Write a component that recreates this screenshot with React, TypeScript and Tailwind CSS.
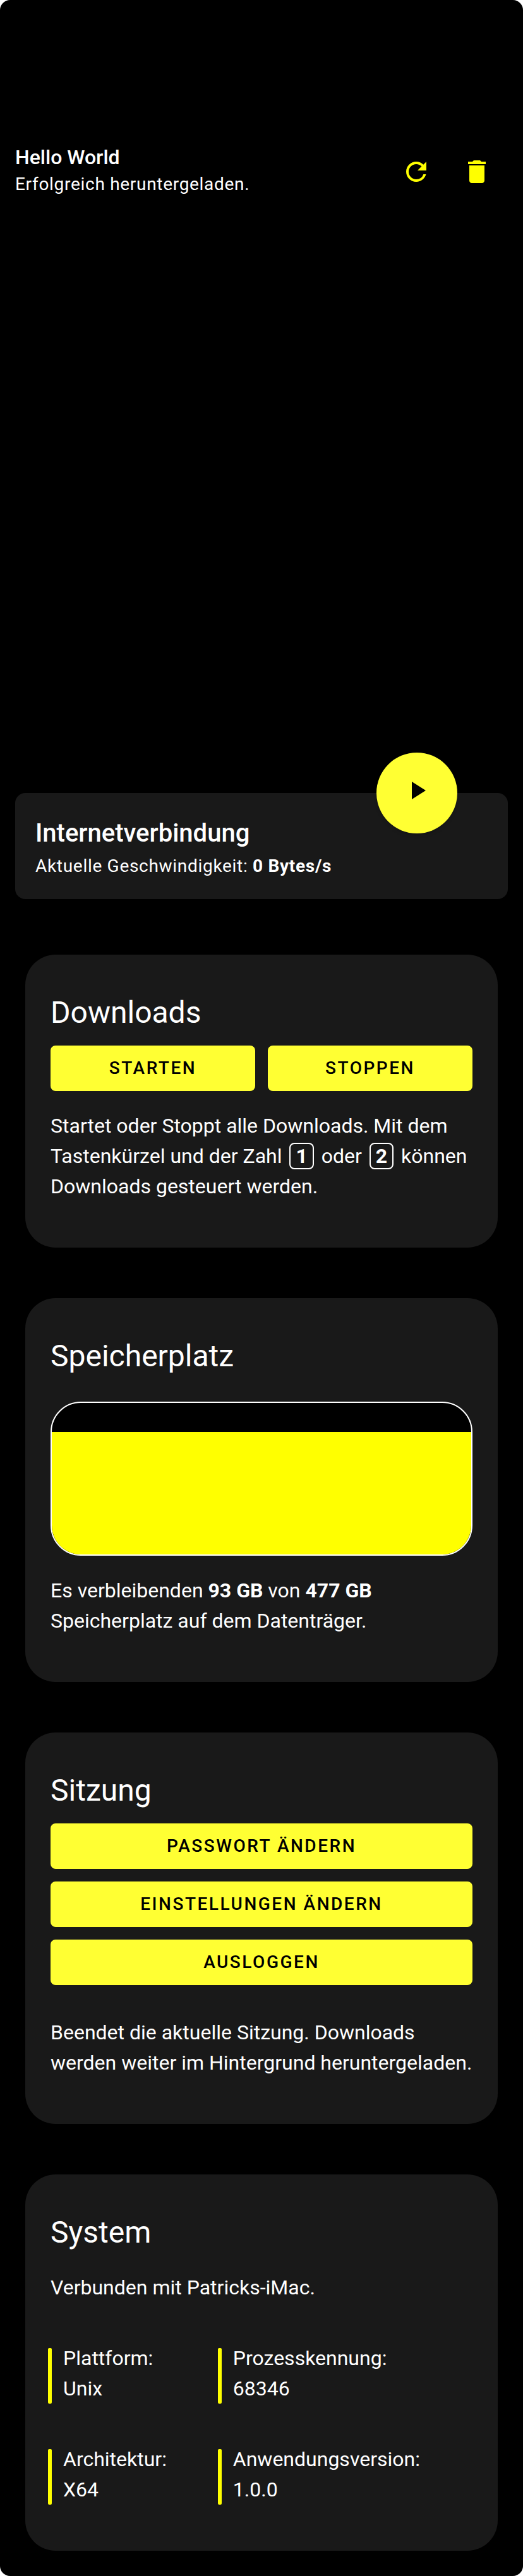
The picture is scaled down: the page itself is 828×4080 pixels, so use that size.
import type { ReactNode } from "react";
import { MdDelete, MdPlayArrow, MdRefresh } from "react-icons/md";

function Card({ title, children }: { title: string; children: ReactNode }) {
  return (
    <section className="rounded-[48px] bg-[#191919] px-10 pt-[60px] pb-[73px]">
      <h2 className="text-[48px] leading-[64px] font-normal">{title}</h2>
      {children}
    </section>
  );
}

function ActionButton({ children }: { children: ReactNode }) {
  return (
    <button
      type="button"
      className="h-[72px] w-full rounded-lg bg-[#ffff33] text-[28px] leading-[36px] font-medium tracking-[0.09em] text-black uppercase"
    >
      {children}
    </button>
  );
}

function Key({ children }: { children: ReactNode }) {
  return (
    <kbd className="mx-1 inline-block rounded-lg border-2 border-white px-2 font-['Roboto',sans-serif] leading-[38px] font-bold">
      {children}
    </kbd>
  );
}

function Fact({ label, value }: { label: string; value: string }) {
  return (
    <div className="flex items-end gap-[18px]">
      <span className="h-[88px] w-[6px] shrink-0 rounded-[2px] bg-[#ffff00]" />
      <dl>
        <dt>{label}</dt>
        <dd>{value}</dd>
      </dl>
    </div>
  );
}

const totalGb = 477;
const freeGb = 93;
const usedPercent = Math.ceil(((totalGb - freeGb) / totalGb) * 100);

export default function App() {
  return (
    <div className="bg-white">
      <main className="rounded-[16px] bg-black pb-10 font-['Roboto',sans-serif] text-[32px] leading-[48px] text-white">
        <header className="flex items-center justify-between pt-[229px] pr-[49px] pl-6">
          <div>
            <h1 className="text-[32px] leading-[40px] font-medium">Hello World</h1>
            <p className="text-[28px] leading-[46px] tracking-wide">Erfolgreich heruntergeladen.</p>
          </div>
          <div className="flex gap-12 text-[#ffff00]">
            <button type="button" aria-label="Neu laden">
              <MdRefresh className="size-12" />
            </button>
            <button type="button" aria-label="Löschen">
              <MdDelete className="size-12" />
            </button>
          </div>
        </header>

        <section className="relative mx-6 mt-[941px] rounded-2xl bg-[#191919] px-8 pt-10 pb-8">
          <h2 className="text-[40px] leading-[48px] font-medium">Internetverbindung</h2>
          <p className="mt-2 text-[28px] leading-[40px] tracking-wide">
            Aktuelle Geschwindigkeit: <b className="font-bold">0 Bytes/s</b>
          </p>
          <button
            type="button"
            aria-label="Starten"
            className="absolute -top-16 right-20 flex size-32 items-center justify-center rounded-full bg-[#ffff33] pb-2 text-black shadow-md"
          >
            <MdPlayArrow className="size-12" />
          </button>
        </section>

        <div className="mt-[88px] flex flex-col gap-20 px-10">
          <Card title="Downloads">
            <div className="mt-5 grid grid-cols-2 gap-5">
              <ActionButton>Starten</ActionButton>
              <ActionButton>Stoppen</ActionButton>
            </div>
            <p className="mt-[31px]">
              Startet oder Stoppt alle Downloads. Mit dem Tastenkürzel und der Zahl <Key>1</Key> oder{" "}
              <Key>2</Key> können Downloads gesteuert werden.
            </p>
          </Card>

          <Card title="Speicherplatz">
            <div className="mt-10 flex h-[244px] flex-col justify-end overflow-hidden rounded-[48px] border-2 border-white bg-black">
              <div className="bg-[#ffff00]" style={{ height: `${usedPercent}%` }} />
            </div>
            <p className="mt-[31px]">
              Es verbleibenden <b className="font-bold">{freeGb} GB</b> von{" "}
              <b className="font-bold">{totalGb} GB</b> Speicherplatz auf dem Datenträger.
            </p>
          </Card>

          <Card title="Sitzung">
            <div className="mt-5 flex flex-col gap-5">
              <ActionButton>Passwort ändern</ActionButton>
              <ActionButton>Einstellungen ändern</ActionButton>
              <ActionButton>Ausloggen</ActionButton>
            </div>
            <p className="mt-[51px]">
              Beendet die aktuelle Sitzung. Downloads werden weiter im Hintergrund heruntergeladen.
            </p>
          </Card>

          <Card title="System">
            <p className="mt-[31px]">Verbunden mit Patricks-iMac.</p>
            <div className="mt-16 -ml-1 grid grid-cols-[2fr_3fr] gap-y-16">
              <Fact label="Plattform:" value="Unix" />
              <Fact label="Prozesskennung:" value="68346" />
              <Fact label="Architektur:" value="X64" />
              <Fact label="Anwendungsversion:" value="1.0.0" />
            </div>
          </Card>
        </div>
      </main>
    </div>
  );
}
